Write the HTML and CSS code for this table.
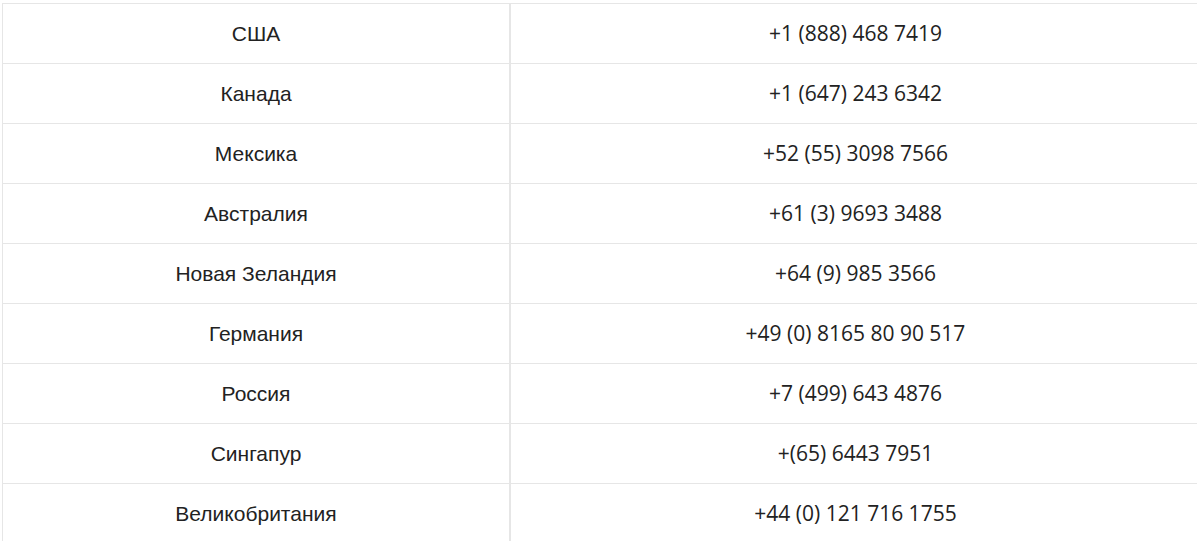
FILE: index.html
```html
<!DOCTYPE html>
<html lang="ru">
<head>
<meta charset="utf-8">
<title>Телефоны</title>
<link rel="stylesheet" href="styles.css">
</head>
<body>
<table class="phones">
<tbody>
<tr><td class="country">США</td><td class="phone">+1 (888) 468 7419</td></tr>
<tr><td class="country">Канада</td><td class="phone">+1 (647) 243 6342</td></tr>
<tr><td class="country">Мексика</td><td class="phone">+52 (55) 3098 7566</td></tr>
<tr><td class="country">Австралия</td><td class="phone">+61 (3) 9693 3488</td></tr>
<tr><td class="country">Новая Зеландия</td><td class="phone">+64 (9) 985 3566</td></tr>
<tr><td class="country">Германия</td><td class="phone">+49 (0) 8165 80 90 517</td></tr>
<tr><td class="country">Россия</td><td class="phone">+7 (499) 643 4876</td></tr>
<tr><td class="country">Сингапур</td><td class="phone">+(65) 6443 7951</td></tr>
<tr><td class="country">Великобритания</td><td class="phone">+44 (0) 121 716 1755</td></tr>
</tbody>
</table>
</body>
</html>
```
FILE: styles.css
```css
html, body {
  margin: 0;
  padding: 0;
  background: #fff;
}
body {
  padding: 3px 1px 0 2px;
}
.phones {
  width: 1195px;
  border-collapse: collapse;
  border-top: 1px solid #e6e6e6;
  border-left: 1px solid #e6e6e6;
  color: #222;
}
.phones tr {
  height: 60px;
}
.phones td {
  padding: 0;
  text-align: center;
  vertical-align: middle;
  border-bottom: 1px solid #e6e6e6;
  line-height: 1.2;
}
.country {
  width: 506px;
  font-family: "Liberation Sans", Arial, sans-serif;
  font-size: 21px;
  border-right: 2px solid #e6e6e6;
}
.phones .phone {
  padding-left: 3px;
  font-family: "Open Sans", sans-serif;
  font-size: 21px;
}
```
